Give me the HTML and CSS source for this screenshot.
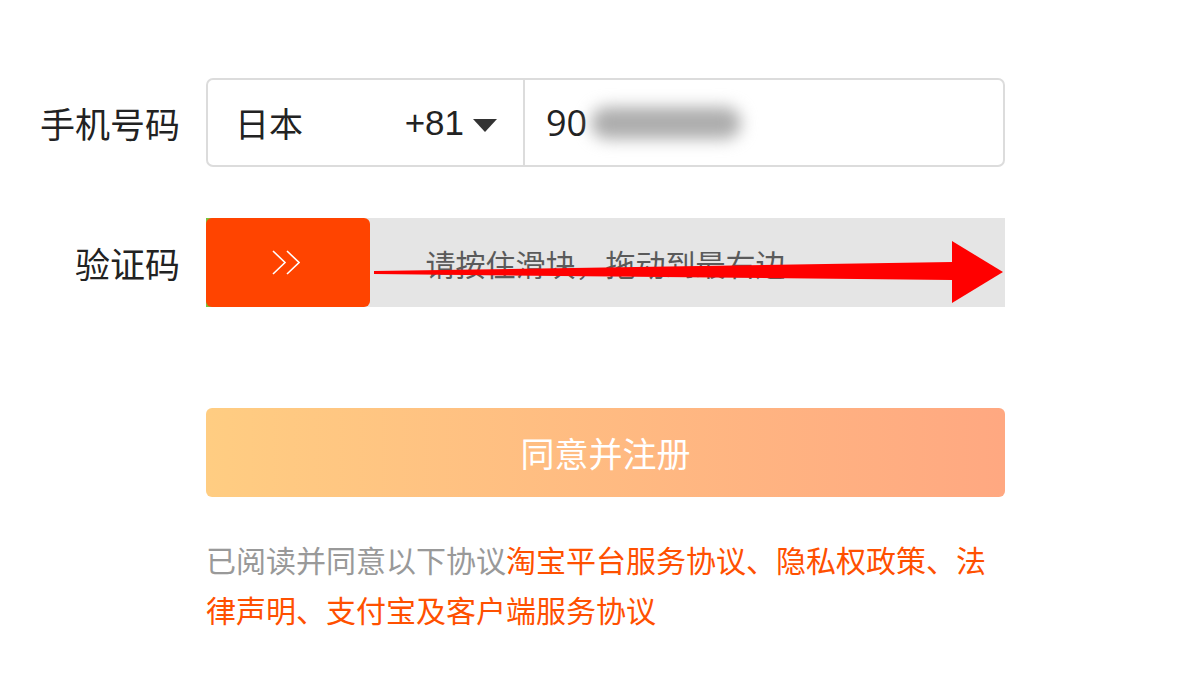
FILE: index.html
```html
<!DOCTYPE html>
<html lang="zh-CN">
<head>
<meta charset="utf-8">
<link rel="stylesheet" href="styles.css">
</head>
<body>
<div class="form">
  <div class="label">手机号码</div>
  <div class="phone">
    <div class="country">
      <span class="cname">日本</span>
      <span class="code">+81<span class="caret"></span></span>
    </div>
    <div class="number">
      <span class="digits">90</span><span class="blur"></span>
    </div>
  </div>

  <div class="label label-verify">验证码</div>
  <div class="slider">
    <div class="progress"></div>
    <div class="handle">
      <svg width="28" height="25" viewBox="0 0 28 25"><path d="M1 1 L13 12.5 L1 24 M15 1 L27 12.5 L15 24" fill="none" stroke="#fff" stroke-width="1.6"/></svg>
    </div>
    <div class="hint">请按住滑块，拖动到最右边</div>
    <svg class="arrow" width="800" height="90" viewBox="0 0 800 90"><polygon points="168,53 746,44 746,62 168,56" fill="#ff0000"/><polygon points="746,23 797,54 746,85" fill="#ff0000"/></svg>
  </div>

  <button class="submit">同意并注册</button>

  <p class="agree">已阅读并同意以下协议<span class="link">淘宝平台服务协议、隐私权政策、法律声明、支付宝及客户端服务协议</span></p>
</div>
</body>
</html>
```

FILE: styles.css
```css
html, body {
  margin: 0;
  padding: 0;
  background: #fff;
}
body {
  font-family: "Noto Sans CJK SC", "Noto Sans", sans-serif;
  color: #222;
}
.form {
  display: grid;
  grid-template-columns: 180px 799px;
  column-gap: 26px;
  row-gap: 51px;
  padding-top: 78px;
  align-items: center;
}
.label {
  text-align: right;
  font-size: 35px;
  line-height: 40px;
  color: #222;
}
.phone {
  box-sizing: border-box;
  height: 89px;
  border: 2px solid #dcdcdc;
  border-radius: 7px;
  display: flex;
  align-items: stretch;
}
.country {
  width: 317px;
  border-right: 2px solid #dcdcdc;
  display: flex;
  align-items: center;
  justify-content: space-between;
  padding: 0 26px 0 27px;
  box-sizing: border-box;
  font-size: 34px;
}
.code {
  font-family: "Liberation Sans", Arial, sans-serif;
  font-size: 35px;
  display: flex;
  align-items: center;
}
.caret {
  width: 0;
  height: 0;
  border-left: 12px solid transparent;
  border-right: 12px solid transparent;
  border-top: 13px solid #333;
  margin-left: 9px;
  margin-top: 6px;
}
.number {
  display: flex;
  align-items: center;
  padding-left: 21px;
}
.digits {
  font-family: "Open Sans", "Noto Sans", sans-serif;
  font-size: 36px;
  color: #222;
}
.blur {
  display: block;
  width: 150px;
  height: 32px;
  background: #adadad;
  filter: blur(8px);
  margin-left: 4px;
  border-radius: 16px;
}
.slider {
  position: relative;
  height: 89px;
  background: #e5e5e5;
  display: flex;
  align-items: center;
  justify-content: center;
}
.progress {
  position: absolute;
  left: 0;
  top: 0;
  bottom: 0;
  width: 20px;
  background: #7ac23c;
}
.handle {
  position: absolute;
  left: 0;
  top: 0;
  width: 164px;
  height: 89px;
  background: #ff4400;
  border-radius: 6px;
  display: flex;
  align-items: center;
  justify-content: center;
}
.handle svg {
  margin-left: -4px;
}
.hint {
  font-size: 30px;
  color: #5a5a5a;
}
.arrow {
  position: absolute;
  left: 0;
  top: 0;
}
.submit {
  grid-column: 2;
  margin-top: 50px;
  height: 89px;
  border: 0;
  border-radius: 6px;
  background: linear-gradient(90deg, #ffcd82 0%, #ffa881 100%);
  color: #fff;
  font-family: "Noto Sans CJK SC", sans-serif;
  font-size: 34px;
  padding: 0;
}
.agree {
  grid-column: 2;
  margin: -14px 0 0;
  font-size: 30px;
  line-height: 50px;
  color: #999;
}
.link {
  color: #ff5000;
}
```
